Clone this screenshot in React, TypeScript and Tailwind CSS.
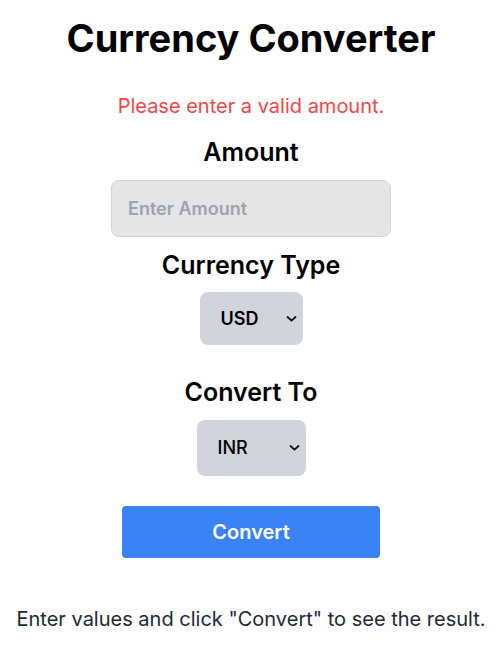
import React from "react";

function Chevron() {
  return (
    <svg
      className="pointer-events-none absolute right-[6px] top-1/2 -translate-y-1/2"
      width="11"
      height="7"
      viewBox="0 0 11 7"
      fill="none"
    >
      <path d="M1.5 1.5 L5.5 5.2 L9.5 1.5" stroke="#111" strokeWidth="1.8" strokeLinecap="round" strokeLinejoin="round" />
    </svg>
  );
}

export default function App() {
  return (
    <div className="min-h-screen bg-white flex flex-col items-center" style={{ fontFamily: "Inter, 'Noto Sans', sans-serif" }}>
      <h1 className="text-[38px] leading-[40px] font-bold text-black mt-[18px]">Currency Converter</h1>
      <p className="text-xl text-[#f04848] mt-[34px]">Please enter a valid amount.</p>
      <label className="text-[25px] leading-[32px] font-semibold text-black mt-[16px]">Amount</label>
      <input
        type="text"
        placeholder="Enter Amount"
        className="mt-[12px] w-[280px] h-[57px] bg-[#e5e5e5] border border-[#d1d5db] rounded-lg px-4 text-lg font-semibold placeholder:text-[#9ca3af] outline-none"
      />
      <label className="text-[25px] leading-[32px] font-semibold text-black mt-[12px]">Currency Type</label>
      <div className="relative mt-[11px]">
        <select className="appearance-none w-[103px] h-[53px] bg-[#d1d5db] rounded-lg pl-[21px] pr-4 text-lg font-semibold text-black">
          <option>USD</option>
        </select>
        <Chevron />
      </div>
      <label className="text-[25px] leading-[32px] font-semibold text-black mt-[31px]">Convert To</label>
      <div className="relative mt-[12px]">
        <select className="appearance-none w-[109px] h-[56px] bg-[#d1d5db] rounded-lg pl-[21px] pr-4 text-lg font-medium text-black">
          <option>INR</option>
        </select>
        <Chevron />
      </div>
      <button className="mt-[30px] w-[258px] h-[52px] bg-[#3b82f6] rounded text-white text-xl font-semibold">Convert</button>
      <p className="text-xl text-[#1f2937] mt-[47px]">Enter values and click "Convert" to see the result.</p>
    </div>
  );
}
